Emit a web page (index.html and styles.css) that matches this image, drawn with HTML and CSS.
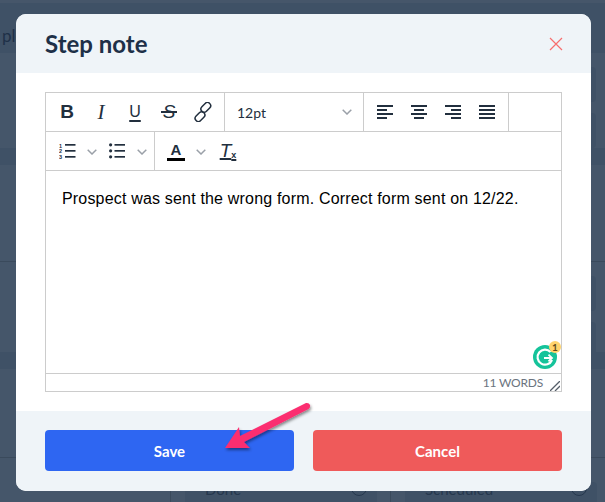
FILE: index.html
```html
<!DOCTYPE html>
<html lang="en">
<head>
  <meta charset="UTF-8">
  <meta name="viewport" content="width=device-width, initial-scale=1.0">
  <title>Step note</title>
  <link rel="stylesheet" href="styles.css">
</head>
<body>
  <!-- dimmed page behind the dialog -->
  <div class="page">
    <div class="page-top"><span class="page-top-text">ple</span></div>
    <div class="page-row">
      <div class="side-boxes"><i></i><i></i></div>
    </div>
    <div class="page-band"></div>
    <div class="page-row page-row-line"></div>
    <div class="page-row page-row-mid">
      <div class="side-boxes"><i></i><i></i></div>
    </div>
    <div class="page-band"></div>
    <div class="page-row page-row-line page-row-last"></div>
    <div class="page-bottom">
      <div class="page-cell">
        <div class="page-select"><span>Done</span></div>
        <div class="page-info"><b></b></div>
      </div>
      <div class="page-cell">
        <div class="page-select"><span>Scheduled</span></div>
        <div class="page-info"><b></b></div>
      </div>
    </div>
  </div>

  <div class="modal">
    <header class="modal-head">
      <h2>Step note</h2>
      <svg class="close" width="14" height="14" viewBox="0 0 14 14"><path d="M1 1l12 12M13 1L1 13" fill="none" stroke="#f76e6e" stroke-width="1.2"/></svg>
    </header>

    <div class="modal-body">
      <div class="editor">
        <div class="toolbar">
          <div class="tb-group tb-group-format">
            <span class="tb-btn glyph-b">B</span>
            <span class="tb-btn glyph-i">I</span>
            <span class="tb-btn glyph-u">U</span>
            <span class="tb-btn glyph-s">S</span>
            <span class="tb-btn">
              <svg width="20" height="20" viewBox="0 0 20 20" fill="none" stroke="#222f3e" stroke-width="1.5">
                <rect x="9.6" y="-0.2" width="6.4" height="11" rx="3.2" transform="rotate(45 12.8 5.3)"/>
                <rect x="3.8" y="9.2" width="6.4" height="11" rx="3.2" transform="rotate(45 7 14.7)"/>
              </svg>
            </span>
          </div>
          <div class="tb-select">
            <span>12pt</span>
            <svg class="chev" width="10" height="6" viewBox="0 0 10 6"><path d="M.7.8L5 5l4.3-4.2" fill="none" stroke="#9aa0a8" stroke-width="1.5"/></svg>
          </div>
          <div class="tb-group tb-group-align">
            <span class="tb-btn"><svg width="16" height="14" viewBox="0 0 16 14" fill="#222f3e"><rect width="16" height="2" y="0"/><rect width="10" height="2" y="4"/><rect width="16" height="2" y="8"/><rect width="10" height="2" y="12"/></svg></span>
            <span class="tb-btn"><svg width="16" height="14" viewBox="0 0 16 14" fill="#222f3e"><rect width="16" height="2" y="0"/><rect x="3" width="10" height="2" y="4"/><rect width="16" height="2" y="8"/><rect x="3" width="10" height="2" y="12"/></svg></span>
            <span class="tb-btn"><svg width="16" height="14" viewBox="0 0 16 14" fill="#222f3e"><rect width="16" height="2" y="0"/><rect x="6" width="10" height="2" y="4"/><rect width="16" height="2" y="8"/><rect x="6" width="10" height="2" y="12"/></svg></span>
            <span class="tb-btn"><svg width="16" height="14" viewBox="0 0 16 14" fill="#222f3e"><rect width="16" height="2" y="0"/><rect width="16" height="2" y="4"/><rect width="16" height="2" y="8"/><rect width="16" height="2" y="12"/></svg></span>
          </div>
        </div>

        <div class="toolbar">
          <div class="tb-group tb-group-lists">
            <span class="tb-split">
              <span class="tb-btn">
                <svg width="17" height="16" viewBox="0 0 17 16">
                  <g fill="#222f3e">
                    <text class="ol-num" x="0" y="4.5">1</text>
                    <text class="ol-num" x="0" y="10">2</text>
                    <text class="ol-num" x="0" y="15.5">3</text>
                    <rect x="6" y="1" width="10.500" height="1.7"/><rect x="6" y="7" width="10.500" height="1.7"/><rect x="6" y="13" width="10.500" height="1.7"/>
                  </g>
                </svg>
              </span>
              <svg class="chev" width="10" height="6" viewBox="0 0 10 6"><path d="M.7.8L5 5l4.3-4.2" fill="none" stroke="#9aa0a8" stroke-width="1.5"/></svg>
            </span>
            <span class="tb-split">
              <span class="tb-btn">
                <svg width="16" height="16" viewBox="0 0 16 16" fill="#222f3e">
                  <circle cx="1.6" cy="1.8" r="1.6"/><circle cx="1.6" cy="7.8" r="1.6"/><circle cx="1.6" cy="13.8" r="1.6"/>
                  <rect x="5.500" y="1" width="10.500" height="1.7"/><rect x="5.500" y="7" width="10.500" height="1.7"/><rect x="5.500" y="13" width="10.500" height="1.7"/>
                </svg>
              </span>
              <svg class="chev" width="10" height="6" viewBox="0 0 10 6"><path d="M.7.8L5 5l4.3-4.2" fill="none" stroke="#9aa0a8" stroke-width="1.5"/></svg>
            </span>
          </div>
          <div class="tb-group tb-group-color">
            <span class="tb-split">
              <span class="tb-btn glyph-a">A</span>
              <svg class="chev" width="10" height="6" viewBox="0 0 10 6"><path d="M.7.8L5 5l4.3-4.2" fill="none" stroke="#9aa0a8" stroke-width="1.5"/></svg>
            </span>
            <span class="tb-btn glyph-t">T<small>x</small></span>
          </div>
        </div>

        <div class="editor-text">
          <p>Prospect was sent the wrong form. Correct form sent on 12/22.</p>
          <div class="grammarly">
            <svg width="24" height="24" viewBox="0 0 24 24">
              <circle cx="12" cy="12" r="12" fill="#15c39a"/>
              <path d="M17.500 7A7.500 7.500 0 1 0 19 15" fill="none" stroke="#fff" stroke-width="2.2"/>
              <path d="M11 13h7.500M15.500 9.600l3.500 3.400-3.500 3.400" fill="none" stroke="#fff" stroke-width="1.800"/>
            </svg>
            <span class="grammarly-count">1</span>
          </div>
        </div>

        <div class="statusbar">
          <span>11 WORDS</span>
          <svg class="resize" width="10" height="10" viewBox="0 0 10 10"><path d="M0 10L10 0M5 10l5-5" fill="none" stroke="#555e69" stroke-width="1.3"/></svg>
        </div>
      </div>
    </div>

    <footer class="modal-foot">
      <button class="btn btn-save">Save</button>
      <button class="btn btn-cancel">Cancel</button>
    </footer>
  </div>

  <!-- annotation arrow drawn on top of the screenshot -->
  <svg class="arrow" width="605" height="502" viewBox="0 0 605 502">
    <defs>
      <filter id="arrowShadow" x="-20%" y="-20%" width="140%" height="140%">
        <feDropShadow dx="1" dy="2" stdDeviation="1.5" flood-color="#000" flood-opacity="0.45"/>
      </filter>
    </defs>
    <path d="M225 448L239 427 240 436 306 403Q309 402.500 310 405 310.500 408 308.500 409L244 442 250 448Z" fill="#fb2e6f" filter="url(#arrowShadow)"/>
  </svg>
</body>
</html>
```

FILE: styles.css
```css
* {
  box-sizing: border-box;
}

html, body {
  margin: 0;
  padding: 0;
}

body {
  width: 605px;
  height: 502px;
  overflow: hidden;
  font-family: Lato, sans-serif;
  background-color: #45566a;
}

/* page behind the modal */
.page {
  height: 502px;
  display: flex;
  flex-direction: column;
}

.page-top {
  height: 53px;
  flex: none;
  background-color: #3f5166;
  border-top: 3px solid #46566a;
  overflow: hidden;
}

.page-top-text {
  display: block;
  margin: 23px 0 0 2px;
  font-size: 17px;
  line-height: 20px;
  color: #1e3048;
}

.page-row {
  height: 95px;
  flex: none;
  padding: 14px 0 0 591px;
}

.page-row-line {
  height: 97px;
  border-bottom: 1px solid #3a4a5c;
}

.page-row-mid {
  height: 90px;
}

.page-row-last {
  height: 89px;
}

.page-band {
  height: 17px;
  flex: none;
  background-color: #3f5166;
}

.side-boxes {
  display: flex;
  flex-direction: column;
  gap: 11px;
}

.side-boxes i {
  display: block;
  width: 5px;
  height: 35px;
  background-color: #3f5166;
  border-radius: 0 4px 4px 0;
}

.page-bottom {
  flex: 1;
  display: flex;
  gap: 13px;
  padding-left: 170px;
}

.page-cell {
  width: 207px;
  display: flex;
  padding-left: 14px;
  font-size: 15px;
  color: #26384e;
  border-left: 1px solid #3a4a5c;
}

.page-select {
  width: 158px;
  padding: 22px 0 0 20px;
  background-color: #3f5166;
}

.page-info {
  width: 34px;
  height: 30px;
  margin-top: 24px;
  padding-left: 8px;
  background-color: #3f5166;
  border-radius: 0 4px 0 0;
}

.page-info b {
  display: block;
  width: 16px;
  height: 16px;
  margin-top: -2px;
  border: 1px solid #26384e;
  border-radius: 50%;
}

/* modal */
.modal {
  position: absolute;
  top: 14px;
  left: 16px;
  width: 575px;
  height: 477px;
  display: flex;
  flex-direction: column;
  background-color: #fff;
  border-radius: 10px;
  overflow: hidden;
}

.modal-head {
  height: 59px;
  flex: none;
  display: flex;
  align-items: center;
  justify-content: space-between;
  padding: 0 28px 0 29px;
  background-color: #eff4f8;
}

.modal-head h2 {
  margin: 0;
  font-size: 24px;
  font-weight: 700;
  color: #1e3048;
}

.modal-body {
  flex: 1;
  padding: 19px 29px;
}

.modal-foot {
  height: 80px;
  flex: none;
  display: flex;
  gap: 19px;
  padding: 19px 29px 20px;
  background-color: #eff4f8;
}

.btn {
  flex: 1;
  border: none;
  border-radius: 4px;
  font-family: Lato, sans-serif;
  font-size: 15px;
  font-weight: 700;
  color: #fff;
}

.btn-save {
  background-color: #2e66f2;
}

.btn-cancel {
  background-color: #ef5a5a;
}

/* editor */
.editor {
  height: 300px;
  display: flex;
  flex-direction: column;
  border: 1px solid #ccc;
}

.toolbar {
  height: 39px;
  flex: none;
  display: flex;
  border-bottom: 1px solid #ccc;
}

.tb-group {
  display: flex;
  padding: 0 4px;
  border-right: 1px solid #ccc;
}

.tb-btn {
  width: 34px;
  height: 38px;
  flex: none;
  display: flex;
  align-items: center;
  justify-content: center;
  color: #222f3e;
}

.tb-split {
  width: 51px;
  display: flex;
  align-items: center;
}

.tb-split .chev {
  margin-left: 3px;
  margin-top: 1px;
}

.tb-group-format {
  width: 179px;
}

.tb-group-align {
  width: 145px;
}

.tb-group-lists {
  width: 109px;
}

.tb-group-color {
  max-width: 106px;
  border-right: none;
}

.tb-select {
  width: 139px;
  display: flex;
  align-items: center;
  justify-content: space-between;
  padding: 0 11px 0 12px;
  border-right: 1px solid #ccc;
  font-size: 14px;
  color: #222f3e;
}

.glyph-b {
  font-family: "Liberation Sans", sans-serif;
  font-size: 19px;
  font-weight: 700;
}

.glyph-i {
  font-family: "Liberation Serif", serif;
  font-size: 21px;
  font-style: italic;
}

.glyph-u {
  font-family: "Liberation Sans", sans-serif;
  font-size: 16px;
  text-decoration: underline 2px;
  text-underline-offset: 3px;
}

.glyph-s {
  position: relative;
  font-family: "Liberation Sans", sans-serif;
  font-size: 19px;
  font-style: italic;
}

/* the strike and colour bars run wider than the letter */
.glyph-s::after {
  content: "";
  position: absolute;
  left: 9px;
  top: 18px;
  width: 16px;
  height: 1.5px;
  background-color: #222f3e;
}

.glyph-a {
  position: relative;
  padding-bottom: 4px;
  font-family: "Liberation Sans", sans-serif;
  font-size: 15px;
  font-weight: 700;
}

.glyph-a::after {
  content: "";
  position: absolute;
  left: 8px;
  top: 26px;
  width: 18px;
  height: 3px;
  background-color: #000;
}

.glyph-t {
  font-family: "Liberation Sans", sans-serif;
  font-size: 19px;
  font-style: italic;
  padding-left: 2px;
  text-decoration: underline 1.5px;
  text-underline-offset: 1px;
}

.glyph-t small {
  font-size: 9px;
  font-style: normal;
  font-weight: 700;
  margin-top: 8px;
  text-decoration: none;
}

.ol-num {
  font-family: "Liberation Sans", sans-serif;
  font-size: 5.5px;
  font-weight: 700;
}

.editor-text {
  position: relative;
  flex: 1;
  padding: 16px;
  font-family: "Liberation Sans", sans-serif;
  font-size: 16px;
  letter-spacing: 0.18px;
  color: #000;
}

.editor-text p {
  margin: 0;
  line-height: 23px;
}

.grammarly {
  position: absolute;
  right: 4px;
  bottom: 4px;
  width: 24px;
  height: 24px;
}

.grammarly svg {
  display: block;
}

.grammarly-count {
  position: absolute;
  top: -4px;
  right: -4px;
  width: 12px;
  height: 12px;
  line-height: 12px;
  text-align: center;
  border-radius: 50%;
  background-color: #ffd36b;
  font-family: Lato, sans-serif;
  font-size: 10px;
  font-weight: 700;
  color: #5c4a1c;
}

.statusbar {
  height: 18px;
  flex: none;
  display: flex;
  align-items: center;
  justify-content: flex-end;
  padding-right: 1px;
  gap: 7px;
  border-top: 1px solid #ccc;
  font-size: 12px;
  letter-spacing: -0.2px;
  color: #6b7480;
}

.resize {
  margin-top: 6px;
}

/* annotation */
.arrow {
  position: absolute;
  top: 0;
  left: 0;
  pointer-events: none;
}
```
